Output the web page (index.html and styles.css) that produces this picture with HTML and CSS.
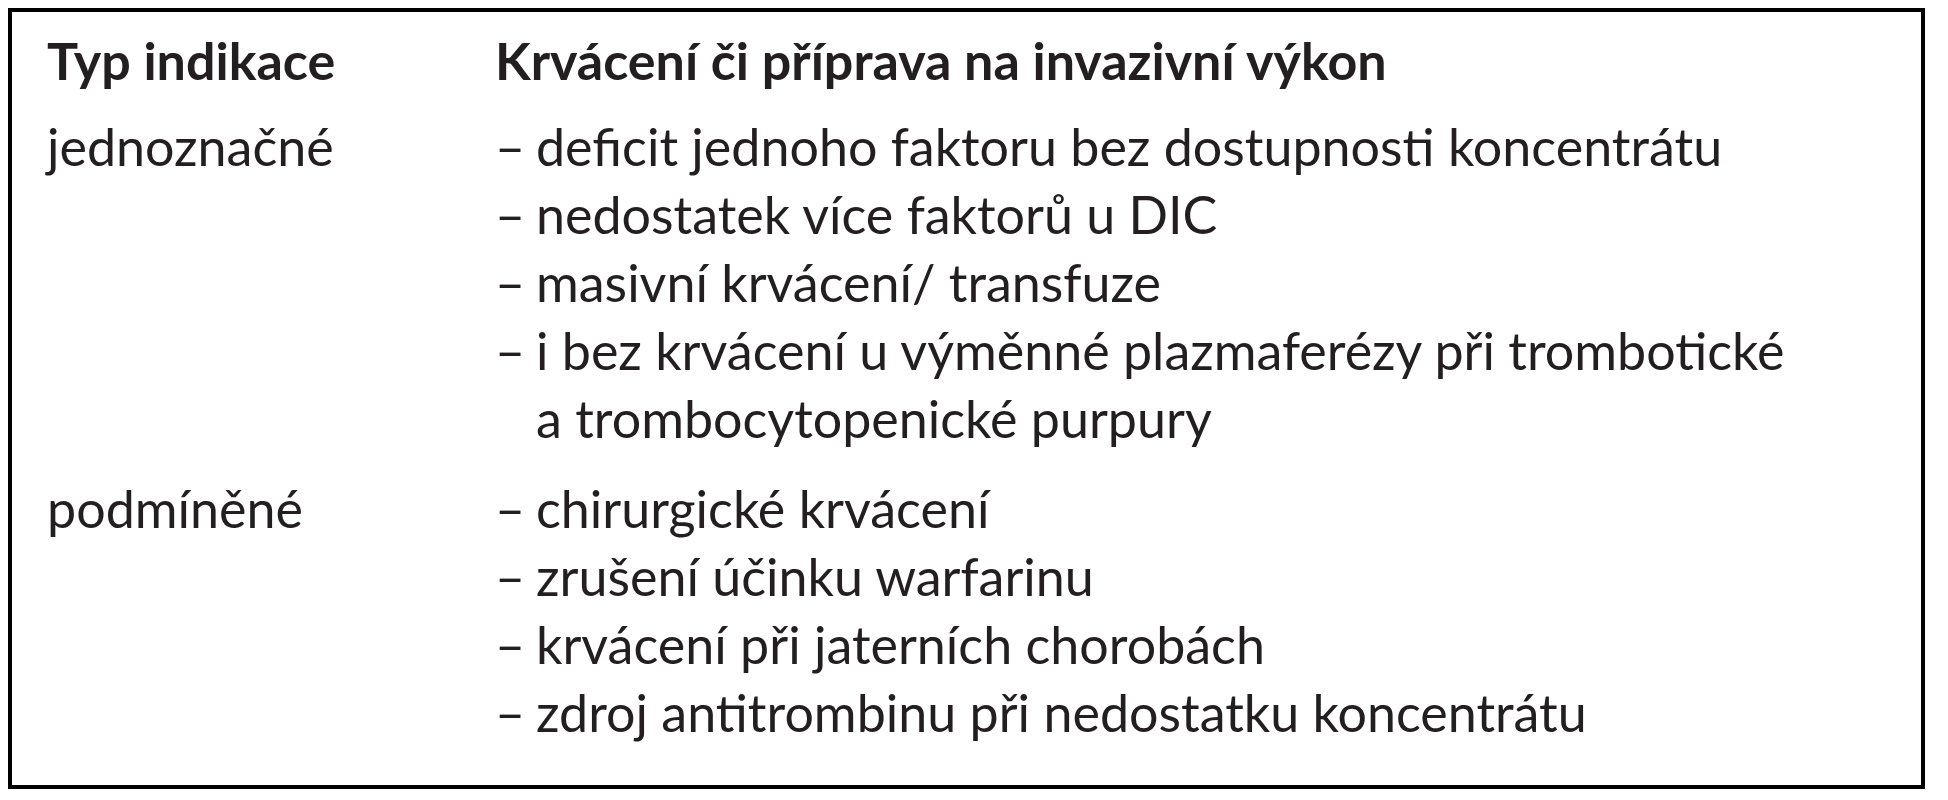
FILE: index.html
```html
<!DOCTYPE html>
<html lang="cs">
<head>
<meta charset="utf-8">
<title>Indikace</title>
<link rel="stylesheet" href="styles.css">
</head>
<body>
<div class="table">
  <div class="row head">
    <div class="type">Typ indikace</div>
    <div class="desc">Krvácení či příprava na invazivní výkon</div>
  </div>
  <div class="row group first">
    <div class="type">jednoznačné</div>
    <ul class="desc items">
      <li><span class="dash">–</span><span class="text">deficit jednoho faktoru bez dostupnosti koncentrátu</span></li>
      <li><span class="dash">–</span><span class="text">nedostatek více faktorů u DIC</span></li>
      <li><span class="dash">–</span><span class="text">masivní krvácení/ transfuze</span></li>
      <li><span class="dash">–</span><span class="text">i bez krvácení u výměnné plazmaferézy při trombotické<br>a trombocytopenické purpury</span></li>
    </ul>
  </div>
  <div class="row group second">
    <div class="type">podmíněné</div>
    <ul class="desc items">
      <li><span class="dash">–</span><span class="text">chirurgické krvácení</span></li>
      <li><span class="dash">–</span><span class="text">zrušení účinku warfarinu</span></li>
      <li><span class="dash">–</span><span class="text">krvácení při jaterních chorobách</span></li>
      <li><span class="dash">–</span><span class="text">zdroj antitrombinu při nedostatku koncentrátu</span></li>
    </ul>
  </div>
</div>
</body>
</html>
```
FILE: styles.css
```css
html, body {
  background: #ffffff;
}
body {
  margin: 8px;
  font-family: "Lato", "Liberation Sans", sans-serif;
  color: #231f20;
}
.table {
  box-sizing: border-box;
  width: 1917px;
  height: 781px;
  border: 4px solid #000;
  padding: 14px 0 0 35px;
  font-size: 52px;
  line-height: 68px;
}
.row {
  display: grid;
  grid-template-columns: 448px 1fr;
}
.head {
  font-weight: 700;
  margin-bottom: 18px;
}
.group.second {
  margin-top: 22px;
}
.items {
  list-style: none;
  margin: 0;
  padding: 0;
}
.items li {
  display: flex;
  white-space: nowrap;
}
.dash {
  flex: 0 0 41px;
}
```
